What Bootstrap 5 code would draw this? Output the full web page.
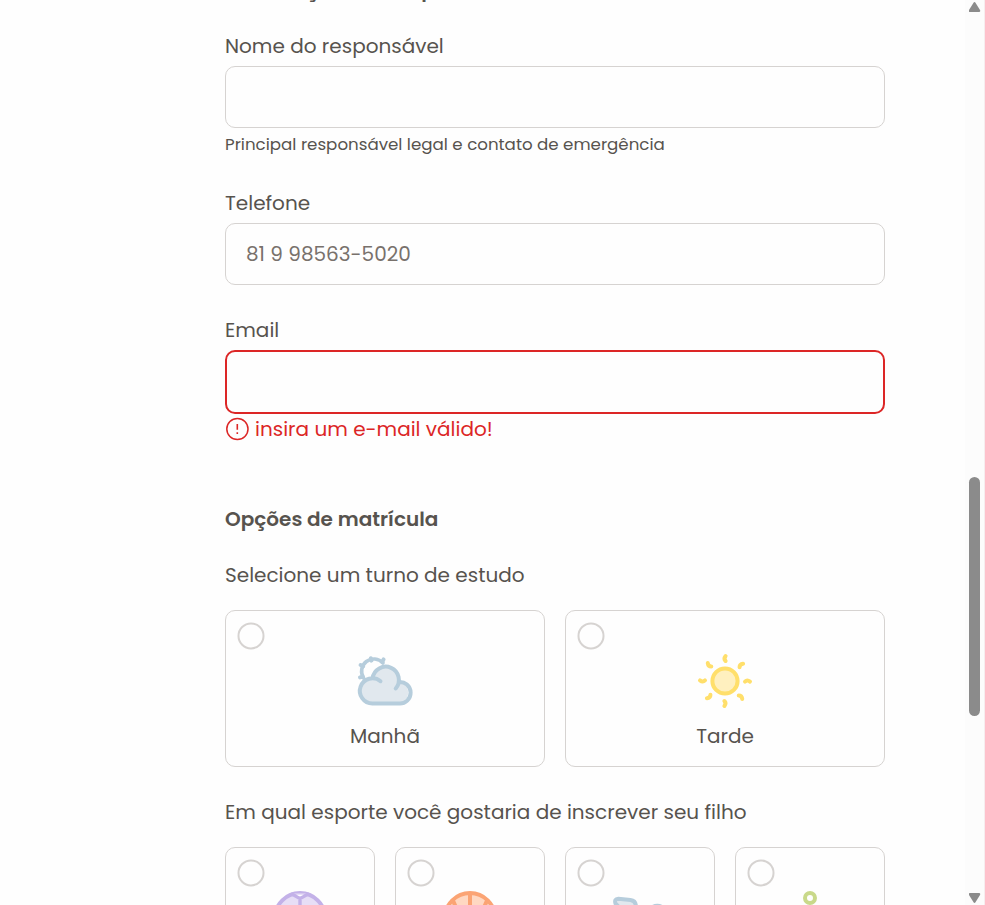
<!DOCTYPE html>
<html lang="pt-BR">
<head>
<meta charset="utf-8">
<meta name="viewport" content="width=device-width, initial-scale=1">
<title>Matrícula</title>
<link href="https://cdn.jsdelivr.net/npm/bootstrap@5.3.0/dist/css/bootstrap.min.css" rel="stylesheet">
<style>
  body{font-family:Poppins,Inter,sans-serif;font-size:20px;line-height:32px;color:#57534e;background:#fefefe}
  .page{height:905px}
  .enroll{width:660px;margin-left:225px;margin-top:-26px}
  .section-title{font-size:20px;line-height:32px;font-weight:600;margin-bottom:24px}
  .options-title{margin-top:59px}
  .form-label{margin-bottom:4px;line-height:32px;display:table}
  .form-control{height:62px;border:1px solid #d6d3d1;border-radius:10px;padding:0 20px;font-size:20px;color:#57534e;background:#fefefe}
  .form-control::placeholder{color:#78716c}
  .form-control.bad{height:64px;border:2px solid #dc2626}
  .field{margin-bottom:29px}
  .field-first{margin-bottom:27px}
  .help{font-size:16.67px;height:32px}
  .alert-line{color:#dc2626;height:30px;line-height:30px;gap:6px}
  .choices{display:grid;gap:20px;margin-top:19px}
  .question{margin-top:29px}
  .two{grid-template-columns:repeat(2,1fr)}
  .four{grid-template-columns:repeat(4,1fr)}
  .choice{height:157px;border:1px solid #d6d3d1;border-radius:10px;padding-top:40px}
  .four .choice{padding-top:39px}
  .choice .form-check-input{left:11px;top:11px;width:27px;height:27px;margin:0;border:2px solid #d6d3d1;background-color:#fefefe;transform:translate(.5px,.4px)}
  .choice svg{width:60px;height:60px}
  .choice .caption-text{margin-top:9px}
  .scroll-track{width:20px;background:#fcfcfc;border-right:1px solid #f7ecee;padding:2px 4px}
  .thumb{width:11px;height:239px;border-radius:6px;background:#8b8b8b;margin-top:465px}
  .scroll-track svg{width:12px;height:10px;fill:#8b8b8b}
</style>
</head>
<body class="overflow-hidden">
<div class="page d-flex justify-content-between align-items-stretch overflow-hidden">
<form class="enroll flex-shrink-0">
  <h2 class="section-title">Informações do responsável</h2>
  <div class="field-first">
    <label class="form-label" for="nome">Nome do responsável</label>
    <input class="form-control" id="nome" type="text">
    <div class="help">Principal responsável legal e contato de emergência</div>
  </div>
  <div class="field">
    <label class="form-label" for="tel">Telefone</label>
    <input class="form-control" id="tel" type="tel" placeholder="81 9 98563-5020">
  </div>
  <div>
    <label class="form-label" for="mail">Email</label>
    <input class="form-control bad" id="mail" type="email">
    <div class="alert-line d-flex align-items-center">
      <svg width="24" height="24" viewBox="0 0 24 24" fill="none" stroke="#dc2626"><circle cx="12.4" cy="12" r="10.6" stroke-width="1.5"/><path d="M12.3 7v5.8M12.3 15.2v1.8" stroke-width="1.6"/></svg>
      <span>insira um e-mail válido!</span></div>
  </div>
  <h2 class="section-title options-title">Opções de matrícula</h2>
  <div>Selecione um turno de estudo</div>
  <div class="choices two">
    <label class="choice position-relative text-center"><input class="form-check-input position-absolute" type="radio" name="turno">
      <svg class="d-block mx-auto" viewBox="0 0 60 60" fill="none" stroke="#b6cddc" stroke-linecap="round">
        <path d="M8.6 27A12.3 12.3 0 0 1 28 12" stroke-width="3.6"/>
        <path d="M5.6 14l2.6 1.4M15.9 7.2l.5 2.4M28.6 8.4l-1.4 2.6M5 26.4l2.6-.6" stroke-width="4"/>
        <path d="M17.5 52.5a12.5 12.5 0 0 1 0-25h.4a13.2 13.2 0 0 1 26.2 3.3A11 11 0 0 1 44 52.5z" fill="#e1e8ee" stroke="none"/>
        <path d="M25.5 30.2A12.6 12.6 0 1 0 17.5 52.5H44A10.8 10.8 0 1 0 43.6 31M17.6 27.2A13.2 13.2 0 1 1 40.7 37.5" stroke-width="4"/>
      </svg>
      <div class="caption-text">Manhã</div></label>
    <label class="choice position-relative text-center"><input class="form-check-input position-absolute" type="radio" name="turno">
      <svg class="d-block mx-auto" viewBox="0 0 60 60" fill="none" stroke="#ffdf6b" stroke-width="4" stroke-linecap="round">
        <defs><path id="ray" d="M30.6 5Q28.4 7.8 30.6 10"/></defs>
        <circle cx="30" cy="30" r="12.6" fill="#fff0bf"/>
        <use href="#ray"/><use href="#ray" transform="rotate(45 30 30)"/><use href="#ray" transform="rotate(90 30 30)"/><use href="#ray" transform="rotate(135 30 30)"/><use href="#ray" transform="rotate(180 30 30)"/><use href="#ray" transform="rotate(225 30 30)"/><use href="#ray" transform="rotate(270 30 30)"/><use href="#ray" transform="rotate(315 30 30)"/>
      </svg>
      <div class="caption-text">Tarde</div></label>
  </div>
  <div class="question">Em qual esporte você gostaria de inscrever seu filho</div>
  <div class="choices four">
    <label class="choice position-relative"><input class="form-check-input position-absolute" type="radio" name="esporte">
      <svg class="d-block mx-auto" viewBox="0 0 60 60" fill="#e7def6" stroke="#c3b1e8" stroke-width="4"><circle cx="30" cy="31" r="25"/><path d="M21 6.5l9 5 9-5M30 11.5v10l-9 7 4 11h10l4-11-9-7" stroke-width="3.4"/><path d="M27 8h6l-3 1.4z" fill="#fefefe" stroke="none"/></svg></label>
    <label class="choice position-relative"><input class="form-check-input position-absolute" type="radio" name="esporte">
      <svg class="d-block mx-auto" viewBox="0 0 60 60" fill="#ffd8c2" stroke="#fba474" stroke-width="4"><circle cx="30" cy="31" r="25"/><path d="M30 6v50M5 31h50M12 12q11 19 0 38M48 12q-11 19 0 38" fill="none"/></svg></label>
    <label class="choice position-relative"><input class="form-check-input position-absolute" type="radio" name="esporte">
      <svg class="d-block mx-auto" viewBox="0 0 60 60" fill="#e1e8ee" stroke="#b6cddc" stroke-width="4" stroke-linejoin="round"><path d="M5.5 16.5Q4 12 8.3 11.7L20.5 13Q26 13.5 26 20L36 34l-8 6Z"/><circle cx="47.3" cy="28" r="9.2"/></svg></label>
    <label class="choice position-relative"><input class="form-check-input position-absolute" type="radio" name="esporte">
      <svg class="d-block mx-auto" viewBox="0 0 60 60" fill="none" stroke="#c9d98a" stroke-width="4"><circle cx="30" cy="11" r="5"/><path d="M12 54l18-30 18 30"/></svg></label>
  </div>
</form>
<div class="scroll-track d-flex flex-column flex-shrink-0" aria-hidden="true">
  <svg viewBox="0.5 0 12 10"><path d="M5 .8Q6-.6 7 .8L11.5 8Q12.3 10 10.5 10H1.5Q-.3 10 .5 8Z"/></svg>
  <div class="thumb"></div>
  <svg class="mt-auto" viewBox="0.5 0 12 10"><path d="M5 9.2Q6 10.6 7 9.2L11.5 2Q12.3 0 10.5 0H1.5Q-.3 0 .5 2Z"/></svg>
</div>
</div>
<script src="https://cdn.jsdelivr.net/npm/bootstrap@5.3.0/dist/js/bootstrap.bundle.min.js"></script>
</body>
</html>
